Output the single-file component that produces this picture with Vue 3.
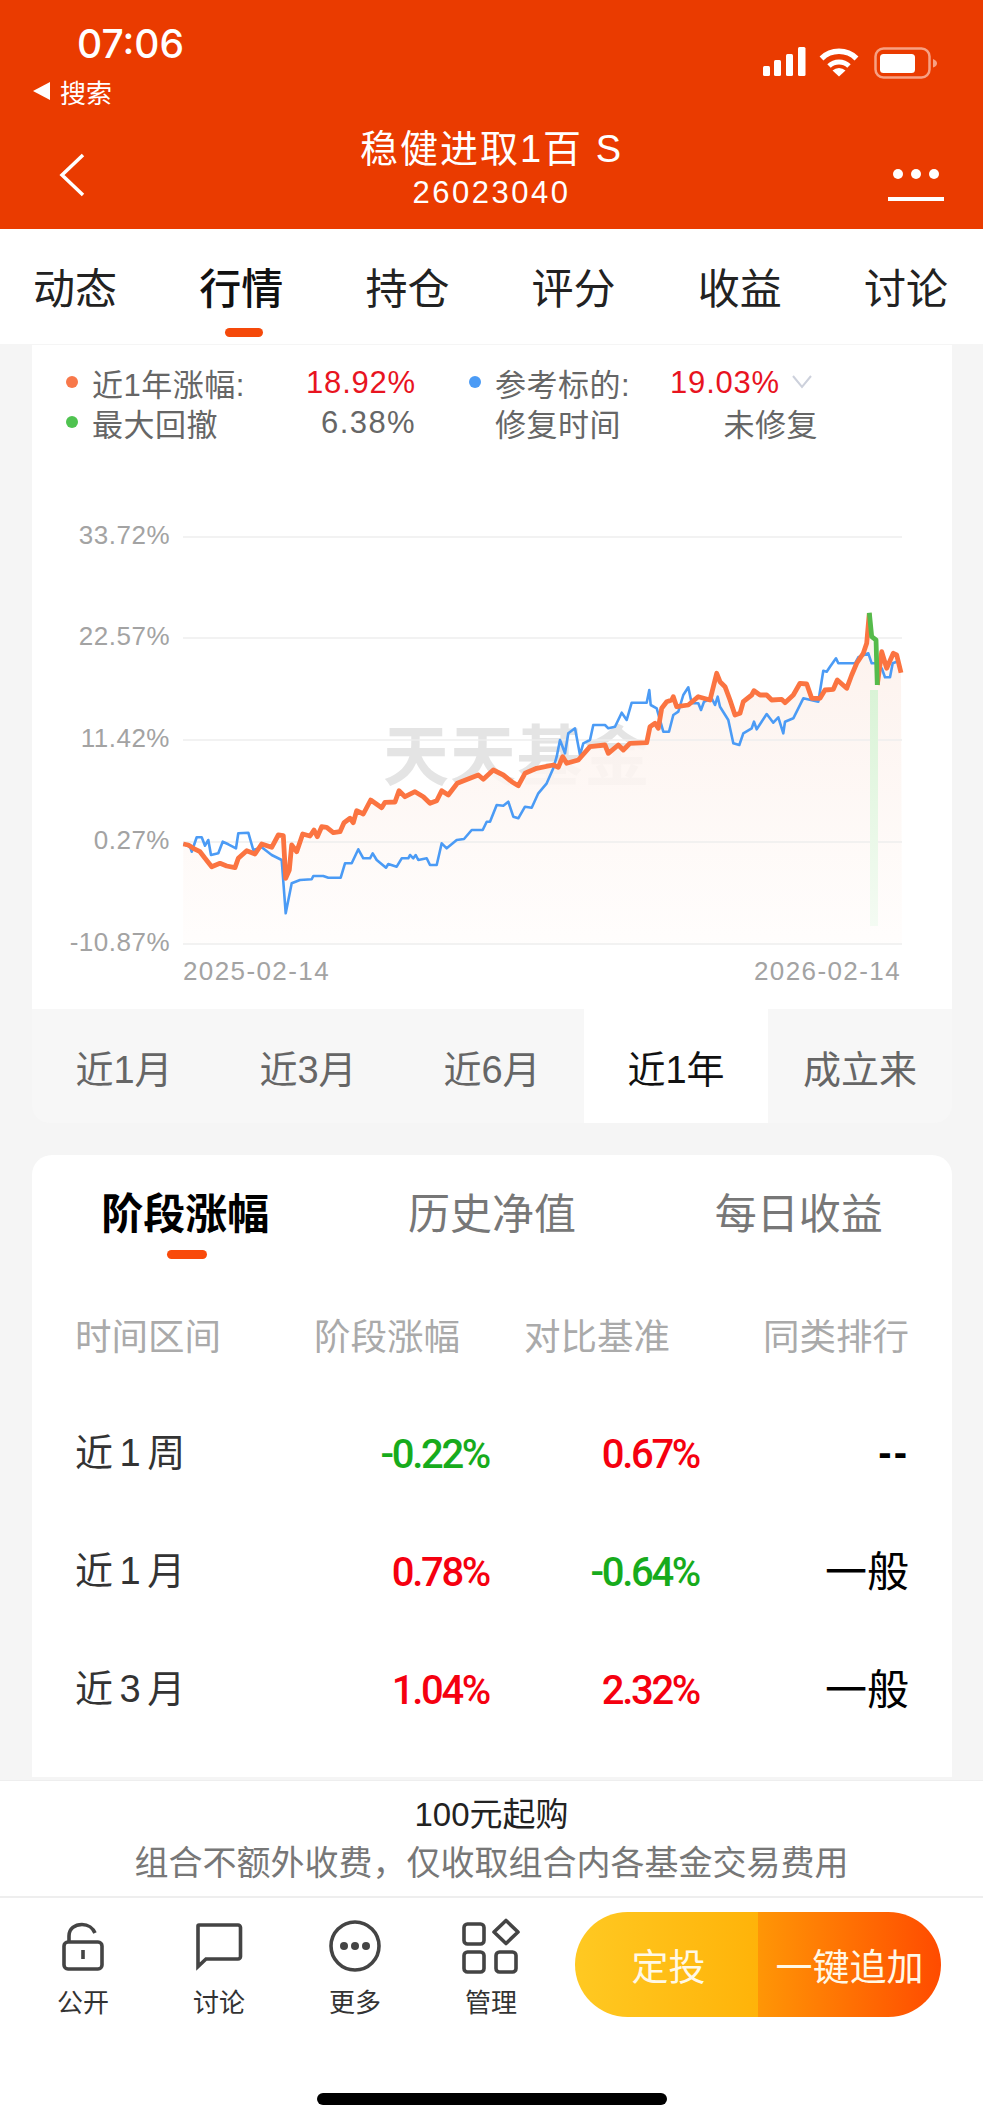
<template>
  <div class="page">
    <header class="top">
      <div class="status">
        <div class="status-left">
          <div class="time">07:06</div>
          <div class="back-app"><span class="tri"></span>搜索</div>
        </div>
        <div class="status-right">
          <svg class="signal" width="44" height="30" viewBox="0 0 44 30">
            <rect x="0" y="19" width="7" height="10" rx="1.5" />
            <rect x="11" y="13" width="7" height="16" rx="1.5" />
            <rect x="23" y="7" width="7" height="22" rx="1.5" />
            <rect x="35" y="0" width="7.5" height="29" rx="1.5" />
          </svg>
          <svg class="wifi" width="42" height="30" viewBox="0 0 40 30">
            <path d="M2.5 11.5A25 25 0 0 1 37.5 11.5" fill="none" stroke="#fff" stroke-width="5.5" />
            <path d="M10 19A14.5 14.5 0 0 1 30 19" fill="none" stroke="#fff" stroke-width="5" />
            <path d="M20 29.5L13.5 23.5A9.5 9.5 0 0 1 26.5 23.5Z" fill="#fff" />
          </svg>
          <svg class="battery" width="64" height="32" viewBox="0 0 64 32">
            <rect x="1.5" y="1.5" width="54" height="29" rx="8" fill="none" stroke="#f7a183" stroke-width="2.5" />
            <rect x="6" y="7" width="35" height="19" rx="3.5" fill="#fff" />
            <path d="M59 12C62 13 63 15 63 16.5C63 18 62 19.5 59 20.5Z" fill="#f7a183" />
          </svg>
        </div>
      </div>
      <div class="nav">
        <div class="nav-side">
          <svg class="chevron-back" width="30" height="46" viewBox="0 0 30 46">
            <path d="M26 3L5 23L26 43" fill="none" stroke="#fff" stroke-width="3.5" />
          </svg>
        </div>
        <div class="nav-title">
          <div class="name">稳健进取1百 S</div>
          <div class="code">26023040</div>
        </div>
        <div class="nav-side nav-more">
          <div class="dots"><i></i><i></i><i></i></div>
          <div class="more-line"></div>
        </div>
      </div>
    </header>

    <nav class="tabs">
      <span v-for="t in tabs" :key="t" class="tab" :class="{ active: t === '行情' }">{{ t }}</span>
    </nav>

    <main class="content">
      <section class="chart-card">
        <div class="legend">
          <span class="dot orange"></span>
          <div class="cell"><span>近1年涨幅:</span><span class="figure red">18.92%</span></div>
          <span class="dot blue"></span>
          <div class="cell">
            <span>参考标的:</span>
            <span class="with-arrow">
              <span class="figure red">19.03%</span>
              <svg width="38" height="16" viewBox="0 0 38 16">
                <path d="M13 2L22 13L31 2" fill="none" stroke="#cdd1dc" stroke-width="2" />
              </svg>
            </span>
          </div>
          <span class="dot green"></span>
          <div class="cell"><span>最大回撤</span><span class="figure">6.38%</span></div>
          <span></span>
          <div class="cell"><span>修复时间</span><span>未修复</span></div>
        </div>

        <svg class="chart" width="920" height="566" viewBox="32 443 920 566">
          <defs>
            <linearGradient id="areaFill" x1="0" y1="0" x2="0" y2="1">
              <stop offset="0" stop-color="#fcefe9" />
              <stop offset="1" stop-color="#fffdfc" />
            </linearGradient>
            <linearGradient id="dropFill" x1="0" y1="0" x2="0" y2="1">
              <stop offset="0" stop-color="#d9f3d6" />
              <stop offset="1" stop-color="#f4fbf3" />
            </linearGradient>
          </defs>
          <text class="watermark" x="383" y="780" textLength="267">天天基金</text>
          <path :d="areaPath" fill="url(#areaFill)" opacity="0.85" />
          <g v-for="g in grid" :key="g.label">
            <line x1="183" x2="902" :y1="g.y" :y2="g.y" stroke="#eeeeee" stroke-width="1.5" />
            <text class="axis" x="170" :y="g.y + 7" text-anchor="end">{{ g.label }}</text>
          </g>
          <rect x="870" y="690" width="8" height="236" fill="url(#dropFill)" />
          <path :d="bluePath" fill="none" stroke="#4b9bf5" stroke-width="2.6" stroke-linejoin="round" />
          <path :d="orangePath" fill="none" stroke="#fb7441" stroke-width="4.8" stroke-linejoin="round" />
          <path :d="greenPath" fill="none" stroke="#55bb4b" stroke-width="4.8" stroke-linejoin="round" />
          <text class="axis date" x="183" y="980">2025-02-14</text>
          <text class="axis date" x="901" y="980" text-anchor="end">2026-02-14</text>
        </svg>
      </section>

      <div class="ranges">
        <span v-for="r in ranges" :key="r" class="range" :class="{ active: r === '近1年' }">{{ r }}</span>
      </div>

      <section class="table-card">
        <div class="table-tabs">
          <span v-for="t in tableTabs" :key="t" class="table-tab" :class="{ active: t === '阶段涨幅' }">{{ t }}</span>
        </div>
        <div class="row head">
          <span>时间区间</span>
          <span class="num">阶段涨幅</span>
          <span class="num">对比基准</span>
          <span class="rank">同类排行</span>
        </div>
        <div v-for="row in rows" :key="row.name" class="row">
          <span class="period">{{ row.name }}</span>
          <span class="val" :class="color(row.gain)">{{ row.gain }}</span>
          <span class="val" :class="color(row.base)">{{ row.base }}</span>
          <span class="rank" :class="{ dash: row.rank === '--' }">{{ row.rank }}</span>
        </div>
      </section>
    </main>

    <div class="notice">
      <div class="notice-main">100元起购</div>
      <div class="notice-sub">组合不额外收费&#65292;仅收取组合内各基金交易费用</div>
    </div>

    <footer class="bar">
      <div class="bar-row">
        <div class="bar-item">
          <svg width="60" height="56" viewBox="0 0 60 56" class="ic">
            <rect x="11" y="24" width="38" height="27" rx="4" />
            <path d="M16 24V18C16 10.5 22 6.5 29 6.5C35 6.5 40 10 42 15" />
            <path d="M30 32V41" />
          </svg>
          <span>公开</span>
        </div>
        <div class="bar-item">
          <svg width="60" height="56" viewBox="0 0 60 56" class="ic">
            <path d="M10 7H49A2.500 2.500 0 0 1 51.500 9.500V38.500A2.500 2.500 0 0 1 49 41H17L9 48.500V8A1 1 0 0 1 10 7Z" />
          </svg>
          <span>讨论</span>
        </div>
        <div class="bar-item">
          <svg width="60" height="56" viewBox="0 0 60 56" class="ic">
            <circle cx="30" cy="28" r="24" />
            <circle cx="19" cy="28" r="4" class="solid" />
            <circle cx="30" cy="28" r="4" class="solid" />
            <circle cx="41" cy="28" r="4" class="solid" />
          </svg>
          <span>更多</span>
        </div>
        <div class="bar-item">
          <svg width="60" height="56" viewBox="0 0 60 56" class="ic">
            <rect x="3" y="6" width="20" height="20" rx="3.500" />
            <rect x="3" y="34" width="20" height="20" rx="3.500" />
            <rect x="35" y="34" width="20" height="20" rx="3.500" />
            <path d="M45 2.500L57 14L45 25.500L33 14Z" stroke-linejoin="round" />
          </svg>
          <span>管理</span>
        </div>
        <div class="buy">
          <div class="buy-left">定投</div>
          <div class="buy-right">一键追加</div>
        </div>
      </div>
      <div class="home"></div>
    </footer>
  </div>
</template>

<script setup>
import { computed } from 'vue'

const tabs = ['动态', '行情', '持仓', '评分', '收益', '讨论']
const ranges = ['近1月', '近3月', '近6月', '近1年', '成立来']
const tableTabs = ['阶段涨幅', '历史净值', '每日收益']

const rows = [
  { name: '近 1 周', gain: '-0.22%', base: '0.67%', rank: '--' },
  { name: '近 1 月', gain: '0.78%', base: '-0.64%', rank: '一般' },
  { name: '近 3 月', gain: '1.04%', base: '2.32%', rank: '一般' },
]

const grid = [
  { label: '33.72%', y: 537 },
  { label: '22.57%', y: 638 },
  { label: '11.42%', y: 740 },
  { label: '0.27%', y: 842 },
  { label: '-10.87%', y: 944 },
]

const color = (v) => (v.startsWith('-') ? 'down' : 'up')

// traced from the reference, left half and right half in separate coordinate spaces
const orangeLeft = [
  [100, 612], [115, 615], [130, 625], [150, 635], [165, 655], [185, 680], [210, 670], [230, 678], [255, 683],
  [265, 655], [290, 632], [315, 642], [335, 612], [365, 622], [385, 585], [400, 587], [407, 715], [418, 690],
  [425, 615], [440, 635], [458, 582], [480, 588], [492, 570], [502, 590], [515, 560], [530, 562], [550, 578],
  [570, 575], [582, 548], [600, 535], [610, 548], [620, 512], [640, 522], [662, 480], [695, 503], [705, 487],
  [735, 486], [747, 452], [765, 470], [795, 455], [820, 470], [840, 490], [860, 482], [875, 452], [895, 465],
  [922, 430], [960, 415], [985, 405], [1000, 418], [1030, 390], [1060, 405], [1085, 425], [1105, 437],
  [1125, 400], [1160, 385], [1210, 375], [1225, 382], [1238, 350], [1250, 370], [1285, 360], [1320, 320],
  [1365, 315], [1375, 340], [1405, 315], [1420, 330], [1440, 310], [1490, 308],
]
const orangeRight = [
  [150, 380], [165, 370], [175, 385], [185, 325], [200, 305], [215, 300], [220, 290], [230, 320], [265, 315],
  [295, 290], [330, 300], [350, 220], [360, 245], [375, 260], [390, 300], [405, 345], [420, 340], [430, 305],
  [455, 285], [462, 272], [480, 285], [500, 285], [515, 300], [545, 298], [555, 308], [580, 285], [600, 250],
  [620, 252], [635, 295], [660, 295], [675, 270], [700, 268], [712, 240], [740, 265], [755, 225], [770, 190],
  [790, 160], [800, 130], [808, 40],
]
const orangeEnd = [
  [832, 255], [845, 155], [860, 205], [880, 160], [890, 165], [903, 218],
]
const greenRight = [[808, 38], [815, 110], [828, 120], [832, 255]]
const blueLeft = [
  [100, 612], [120, 620], [125, 635], [140, 592], [155, 592], [165, 617], [175, 600], [183, 645], [205, 640],
  [218, 605], [235, 613], [258, 625], [265, 580], [295, 578], [310, 630], [335, 622], [365, 645], [395, 660],
  [407, 820], [425, 730], [450, 720], [485, 718], [490, 708], [520, 708], [535, 713], [572, 713], [585, 670],
  [605, 670], [625, 628], [640, 655], [660, 655], [668, 640], [680, 660], [708, 683], [715, 672], [740, 680],
  [755, 655], [775, 655], [780, 645], [790, 655], [797, 645], [805, 660], [830, 655], [840, 675], [860, 675],
  [875, 610], [890, 625], [920, 600], [942, 597], [965, 570], [998, 570], [1010, 545], [1020, 545], [1040, 495],
  [1060, 497], [1075, 485], [1090, 530], [1105, 535], [1125, 500], [1145, 503], [1165, 460], [1190, 430],
  [1210, 385], [1220, 350], [1230, 300], [1245, 340], [1255, 280], [1275, 265], [1290, 345], [1300, 310],
  [1320, 300], [1330, 255], [1365, 255], [1375, 265], [1395, 260], [1415, 218], [1430, 240], [1445, 188],
  [1490, 188],
]
const blueRight = [
  [148, 270], [152, 315], [170, 325], [190, 395], [207, 395], [220, 345], [235, 335], [250, 285], [265, 262],
  [275, 310], [295, 310], [303, 330], [312, 305], [335, 295], [345, 315], [353, 290], [360, 320], [385, 360],
  [400, 430], [418, 435], [430, 400], [455, 385], [462, 365], [470, 388], [500, 342], [520, 368], [535, 352],
  [550, 400], [555, 365], [580, 355], [610, 295], [655, 305], [670, 212], [680, 215], [690, 200], [708, 175],
  [715, 190], [765, 190], [775, 172], [805, 160], [815, 190], [830, 190], [845, 205], [855, 232], [870, 232],
  [878, 190], [890, 185],
]

const fromLeft = (p) => [p[0] / 3 + 150, p[1] / 3 + 640]
const fromRight = (p) => [p[0] / 3 + 600, p[1] / 3 + 600]
const toPath = (pts) => 'M' + pts.map((p) => p[0].toFixed(1) + ' ' + p[1].toFixed(1)).join('L')

const orangeRise = [...orangeLeft.map(fromLeft), ...orangeRight.map(fromRight)]
const orangeTail = orangeEnd.map(fromRight)

const orangePath = computed(() => toPath(orangeRise) + toPath(orangeTail))
const greenPath = computed(() => toPath(greenRight.map(fromRight)))
const bluePath = computed(() => toPath([...blueLeft.map(fromLeft), ...blueRight.map(fromRight)]))
const areaPath = computed(
  () => toPath([...orangeRise, ...orangeTail]) + 'L902 944L183 944Z',
)
</script>

<style scoped>
* {
  box-sizing: border-box;
}

.page {
  width: 983px;
  height: 2126px;
  overflow: hidden;
  background: #f5f5f5;
  font-family: 'Liberation Sans', 'Noto Sans CJK SC', sans-serif;
  color: #111;
}

.top {
  height: 229px;
  background: #ea3b00;
  color: #fff;
}

.status {
  height: 120px;
  display: flex;
  justify-content: space-between;
}

.status-left {
  padding: 20px 0 0 33px;
}

.time {
  padding-left: 44px;
  font-family: Inter, sans-serif;
  font-size: 39px;
  font-weight: 500;
  line-height: 48px;
}

.back-app {
  display: flex;
  align-items: center;
  height: 40px;
  margin-top: 3px;
  font-size: 26px;
}

.tri {
  width: 0;
  height: 0;
  margin-right: 10px;
  border-top: 9px solid transparent;
  border-bottom: 9px solid transparent;
  border-right: 17px solid #fff;
}

.status-right {
  display: flex;
  align-items: flex-start;
  padding: 47px 45px 0 0;
}

.signal {
  fill: #fff;
  margin-right: 11px;
}

.wifi {
  margin-right: 14px;
}

.nav {
  display: flex;
  height: 109px;
}

.nav-side {
  width: 130px;
  padding: 32px 0 0 57px;
}

.nav-title {
  flex: 1;
  text-align: center;
}

.name {
  margin-top: 6px;
  font-size: 38px;
  line-height: 46px;
  letter-spacing: 2px;
}

.code {
  font-size: 31px;
  line-height: 40px;
  letter-spacing: 2.500px;
  padding-top: 1px;
}

.nav-more {
  padding: 49px 40px 0 36px;
}

.dots {
  display: flex;
  justify-content: space-between;
  width: 46px;
  margin-left: 4px;
}

.dots i {
  width: 10px;
  height: 10px;
  border-radius: 50%;
  background: #fff;
}

.more-line {
  width: 56px;
  height: 4px;
  margin-top: 18px;
  margin-left: -1px;
  background: #fff;
}

.tabs {
  display: flex;
  justify-content: space-between;
  height: 115px;
  padding: 36px 35px 0 33px;
  background: #fff;
}

.tab {
  position: relative;
  font-size: 42px;
  line-height: 50px;
  height: 50px;
  color: #222;
}

.tab.active {
  font-weight: 500;
  color: #111;
}

.tab.active::after {
  content: '';
  position: absolute;
  left: 26px;
  top: 63px;
  width: 38px;
  height: 9px;
  border-radius: 5px;
  background: #f5490a;
}

.content {
  padding: 1px 31px 0 32px;
  height: 1436px;
}

.chart-card {
  background: #fff;
  height: 664px;
}

.legend {
  display: grid;
  grid-template-columns: 26px 324px 79px 323px;
  grid-auto-rows: 40px;
  align-items: center;
  padding: 17px 0 0 34px;
  height: 98px;
  font-size: 31px;
  letter-spacing: 0.500px;
  color: #666;
}

.cell {
  display: flex;
  justify-content: space-between;
  align-items: center;
}

.figure {
  padding-top: 2px;
  letter-spacing: 1.400px;
}

.figure.red {
  letter-spacing: 0.800px;
}

.with-arrow {
  display: flex;
  align-items: center;
}

.dot {
  width: 12px;
  height: 12px;
  border-radius: 50%;
}

.dot.orange {
  background: #f8784a;
}

.dot.blue {
  background: #4b9bf5;
  margin-left: 53px;
}

.dot.green {
  background: #4fc350;
}

.red {
  color: #e8141f;
}

.chart {
  display: block;
}

.axis {
  font-size: 26px;
  letter-spacing: 0.500px;
  fill: #a3a3a3;
}

.date {
  font-size: 26px;
  letter-spacing: 1.400px;
}

.watermark {
  font-size: 66px;
  font-weight: 700;
  fill: #e4e4e4;
}

.ranges {
  display: grid;
  grid-template-columns: repeat(5, 184px);
  height: 114px;
  background: #f7f7f7;
  border-radius: 0 0 18px 18px;
  overflow: hidden;
}

.range {
  display: flex;
  align-items: center;
  justify-content: center;
  font-size: 38px;
  color: #666;
}

.range.active {
  background: #fff;
  color: #111;
}

.table-card {
  height: 622px;
  margin-top: 32px;
  background: #fff;
  border-radius: 20px 20px 0 0;
}

.table-tabs {
  display: grid;
  grid-template-columns: repeat(3, 1fr);
  height: 116px;
}

.table-tab {
  position: relative;
  text-align: center;
  padding-top: 35px;
  font-size: 42px;
  line-height: 50px;
  color: #777;
}

.table-tab.active {
  font-weight: 700;
  color: #000;
}

.table-tab.active::after {
  content: '';
  position: absolute;
  left: 135px;
  top: 95px;
  width: 40px;
  height: 9px;
  border-radius: 5px;
  background: #f94a0a;
}

.row {
  display: grid;
  grid-template-columns: 205px 210px 210px 209px;
  align-items: center;
  height: 118px;
  padding: 0 43px;
}

.row.head {
  height: 122px;
  padding-top: 4px;
  font-size: 36.500px;
  color: #aaa;
}

.num {
  text-align: right;
  padding-right: 30px;
}

.rank {
  text-align: right;
}

.period {
  font-size: 38px;
  word-spacing: -4px;
  color: #333;
  padding-bottom: 5px;
}

.val {
  padding-top: 4px;
  padding-right: 1px;
  text-align: right;
  font-family: Roboto, sans-serif;
  font-size: 40px;
  font-weight: 500;
  letter-spacing: -2.300px;
}

.val.up {
  color: #f5000f;
}

.val.down {
  color: #17ab1c;
}

.row:not(.head) .rank {
  padding-bottom: 3px;
  font-size: 42px;
  color: #000;
}

.row:not(.head) .rank.dash {
  padding-bottom: 0;
  font-weight: 700;
  font-size: 40px;
  letter-spacing: 2px;
}

.notice {
  height: 118px;
  padding-top: 9px;
  background: #fff;
  border-top: 1px solid #eee;
  border-bottom: 2px solid #eee;
  text-align: center;
  line-height: 49px;
}

.notice-main {
  font-size: 33px;
  color: #222;
}

.notice-sub {
  font-size: 34px;
  color: #777;
}

.bar {
  height: 228px;
  background: #fff;
}

.bar-row {
  display: flex;
  align-items: flex-start;
  padding: 14px 0 0 15px;
}

.bar-item {
  display: flex;
  flex-direction: column;
  align-items: center;
  width: 136px;
  padding-top: 6px;
  font-size: 26px;
  line-height: 30px;
  color: #333;
}

.bar-item span {
  margin-top: 14px;
}

.ic {
  fill: none;
  stroke: #444;
  stroke-width: 3.600;
}

.ic .solid {
  fill: #444;
  stroke: none;
}

.buy {
  display: flex;
  width: 366px;
  height: 105px;
  margin-left: 16px;
  border-radius: 53px;
  overflow: hidden;
  font-size: 37px;
  color: #fff8e6;
}

.buy-left,
.buy-right {
  flex: 0 0 183px;
  display: flex;
  align-items: center;
  justify-content: center;
}

.buy-left {
  padding-left: 4px;
  background: linear-gradient(90deg, #ffc922, #ffb309);
}

.buy-right {
  background: linear-gradient(90deg, #ff9606, #ff4b00);
}

.home {
  width: 350px;
  height: 12px;
  margin: 75px 0 0 317px;
  border-radius: 6px;
  background: #000;
}
</style>
